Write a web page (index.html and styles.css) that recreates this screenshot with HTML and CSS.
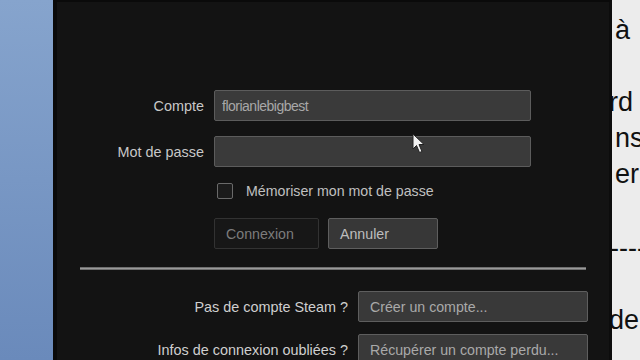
FILE: index.html
```html
<!DOCTYPE html>
<html lang="fr">
<head>
    <meta charset="UTF-8">
    <meta name="viewport" content="width=device-width, initial-scale=1.0">
    <title>Steam - Connexion</title>
    <link rel="stylesheet" href="styles.css">
</head>
<body>

<div class="screen">
    <div class="sidebar"></div>

    <div class="dialog">
        <div class="login">
            <label class="label" for="account">Compte</label>
            <input type="text" class="field" id="account" value="florianlebigbest">

            <label class="label" for="password">Mot de passe</label>
            <input type="password" class="field" id="password">

            <div class="remember">
                <span class="checkbox"></span>
                <span>Mémoriser mon mot de passe</span>
            </div>

            <div class="actions">
                <button class="btn btn-disabled">Connexion</button>
                <button class="btn btn-cancel">Annuler</button>
            </div>
        </div>

        <div class="separator"></div>

        <div class="help">
            <span class="help-label">Pas de compte Steam ?</span>
            <button class="btn btn-link">Créer un compte...</button>

            <span class="help-label">Infos de connexion oubliées ?</span>
            <button class="btn btn-link">Récupérer un compte perdu...</button>
        </div>

        <!-- pointeur de la souris -->
        <svg class="cursor" width="14" height="22" viewBox="0 0 14 22">
            <path d="M1 1 L1 16 L4.5 12.5 L7.5 19.5 L10 18.5 L7 11.5 L12 11.5 Z" fill="#f2f2f2" stroke="#222" stroke-width="1"/>
        </svg>
    </div>

    <div class="document">
        <p class="line line-first">à</p>
        <p class="line line-gap">rd</p>
        <p class="line">ns</p>
        <p class="line">er</p>
        <p class="line line-dash">----</p>
        <p class="line line-last">de</p>
    </div>
</div>

</body>
</html>
```

FILE: styles.css
```css
body {
    margin: 0;
    background-color: #121212;
    font-family: "Liberation Sans", Arial, sans-serif;
}

.screen {
    display: flex;
    width: 640px;
    height: 360px;
    overflow: hidden;
}

.sidebar {
    width: 53px;
    flex-shrink: 0;
    background: linear-gradient(to bottom, #86a4cd, #6a8abb);
}

.dialog {
    position: relative;
    width: 552px;
    flex-shrink: 0;
    background-color: #131313;
    border-left: 4px solid #0a0a0a;
    border-right: 3px solid #0c0c0c;
    border-top: 2px solid #0a0a0a;
    color: #c8c8c8;
    font-size: 14.4px;
}

/* formulaire principal */
.login {
    display: grid;
    grid-template-columns: 147px 317px;
    column-gap: 10px;
    row-gap: 15px;
    align-items: center;
    padding-top: 88px;
}

.label {
    text-align: right;
}

.field {
    box-sizing: border-box;
    height: 31px;
    padding: 0 7px;
    border: 1px solid #5c5c5c;
    border-radius: 2px;
    background-color: #3a3a3a;
    color: #a8a8a8;
    font-family: inherit;
    font-size: 14px;
    letter-spacing: -0.5px;
}

.remember {
    grid-column: 2;
    display: flex;
    align-items: center;
    gap: 13px;
    margin-top: 1px;
    padding-left: 3px;
    color: #c0c0c0;
    font-size: 14.2px;
}

.checkbox {
    width: 14px;
    height: 14px;
    border: 1px solid #6a6a6a;
    border-radius: 2px;
    background-color: #1b1b1b;
}

.actions {
    grid-column: 2;
    display: flex;
    gap: 9px;
    margin-top: 4px;
}

.btn {
    box-sizing: border-box;
    height: 31px;
    padding: 0 11px;
    border-radius: 2px;
    font-family: inherit;
    font-size: 14.2px;
    text-align: left;
}

.btn-disabled {
    width: 105px;
    border: 1px solid #323232;
    background-color: #171717;
    color: #7c7c7c;
}

.btn-cancel {
    width: 110px;
    border: 1px solid #5e5e5e;
    background-color: #373737;
    color: #bdbdbd;
}

.separator {
    height: 3px;
    margin: 18px 23px 0 23px;
    background: linear-gradient(to bottom, #5a5a5a, #9a9a9a, #5a5a5a);
}

/* aide */
.help {
    display: grid;
    grid-template-columns: 291px 230px;
    column-gap: 10px;
    row-gap: 12px;
    align-items: center;
    padding-top: 21px;
}

.help-label {
    text-align: right;
    color: #cfcfcf;
}

.btn-link {
    border: 1px solid #5e5e5e;
    background-color: #393939;
    color: #a9a9a9;
}

.cursor {
    position: absolute;
    left: 355px;
    top: 131px;
}

/* document derrière */
.document {
    flex: 1;
    background-color: #ececec;
    color: #111;
    font-size: 27px;
    overflow: hidden;
}

.line {
    margin: 0;
    height: 36px;
    line-height: 36px;
    white-space: nowrap;
    text-indent: 3px;
}

.line-first {
    margin-top: 12px;
}

.line-gap {
    margin-top: 36px;
    text-indent: -3px;
}

.line-dash {
    margin-top: 38px;
    text-indent: -2px;
}

.line-last {
    margin-top: 36px;
    text-indent: -3px;
}
```
